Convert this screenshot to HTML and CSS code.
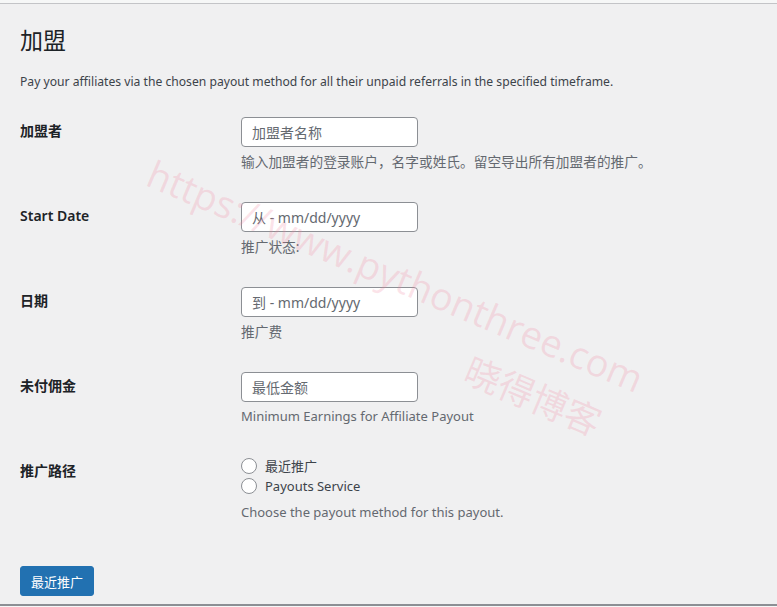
FILE: index.html
```html
<!DOCTYPE html>
<html lang="zh-CN">
<head>
  <meta charset="UTF-8">
  <title>加盟</title>
  <link rel="stylesheet" href="styles.css">
</head>
<body>
  <div class="screen">
    <h1>加盟</h1>
    <p class="intro">Pay your affiliates via the chosen payout method for all their unpaid referrals in the specified timeframe.</p>

    <div class="form-table">
      <div class="row">
        <label class="label">加盟者</label>
        <div class="field">
          <input type="text" placeholder="加盟者名称">
          <p class="description zh">输入加盟者的登录账户，名字或姓氏。留空导出所有加盟者的推广。</p>
        </div>
      </div>
      <div class="row">
        <label class="label">Start Date</label>
        <div class="field">
          <input type="text" placeholder="从 - mm/dd/yyyy">
          <p class="description zh">推广状态:</p>
        </div>
      </div>
      <div class="row">
        <label class="label">日期</label>
        <div class="field">
          <input type="text" placeholder="到 - mm/dd/yyyy">
          <p class="description zh">推广费</p>
        </div>
      </div>
      <div class="row">
        <label class="label">未付佣金</label>
        <div class="field">
          <input type="text" placeholder="最低金额">
          <p class="description">Minimum Earnings for Affiliate Payout</p>
        </div>
      </div>
      <div class="row">
        <label class="label">推广路径</label>
        <div class="field">
          <label class="radio"><input type="radio" name="method"><span>最近推广</span></label>
          <label class="radio"><input type="radio" name="method"><span>Payouts Service</span></label>
          <p class="description">Choose the payout method for this payout.</p>
        </div>
      </div>
    </div>

    <button class="button-primary">最近推广</button>

    <div class="watermark">
      <span class="wm-url">https://www.pythonthree.com</span>
      <span class="wm-name">晓得博客</span>
    </div>
  </div>
</body>
</html>
```

FILE: styles.css
```css
html, body {
  margin: 0;
  height: 100%;
}
body {
  background: #f6f7f7;
  font-family: "Noto Sans", "Noto Sans CJK SC", sans-serif;
  color: #1d2327;
  font-size: 13px;
}
.screen {
  position: relative;
  overflow: hidden;
  margin-top: 3px;
  height: 603px;
  box-sizing: border-box;
  background: #f0f0f1;
  border-top: 1px solid #c3c4c7;
  border-bottom: 2px solid #8c8f94;
  padding: 0 20px;
}
h1 {
  margin: 22px 0 0;
  font-size: 23px;
  font-weight: 400;
  line-height: 29px;
  color: #1d2327;
}
.intro {
  margin: 17px 0 0;
  font-size: 12.15px;
  line-height: 19px;
  color: #3c434a;
}
.form-table {
  margin-top: 26px;
}
.row {
  display: flex;
  height: 85px;
}
.label {
  width: 220px;
  flex-shrink: 0;
  padding-top: 4px;
  font-size: 14px;
  font-weight: 600;
  line-height: 20px;
  color: #1d2327;
}
.field {
  padding-left: 1px;
}
.field input[type="text"] {
  display: block;
  box-sizing: border-box;
  width: 177px;
  height: 30px;
  margin: 0;
  padding: 0 10px;
  border: 1px solid #8c8f94;
  border-radius: 4px;
  background: #fff;
  font-family: inherit;
  font-size: 14px;
  color: #2c3338;
}
.field input::placeholder {
  color: #646970;
}
.description {
  margin: 5px 0 0;
  font-size: 13px;
  line-height: 19px;
  color: #646970;
}
.description.zh {
  font-size: 13.7px;
}
.radio {
  display: flex;
  align-items: center;
  height: 20px;
  line-height: 20px;
  font-size: 13px;
  color: #3c434a;
}
.radio:first-child {
  margin-top: -1px;
}
.radio input {
  appearance: none;
  flex-shrink: 0;
  width: 16px;
  height: 16px;
  margin: 0 8px 0 0;
  border: 1px solid #8c8f94;
  border-radius: 50%;
  background: #fff;
}
.radio + .description {
  margin-top: 7px;
}
.button-primary {
  display: block;
  margin-top: 24px;
  width: 74px;
  height: 30px;
  padding: 0;
  border: 1px solid #2271b1;
  border-radius: 3px;
  background: #2271b1;
  color: #fff;
  font-family: inherit;
  font-size: 13px;
}
.watermark {
  position: absolute;
  left: 160px;
  top: 143px;
  pointer-events: none;
  color: rgba(240, 130, 155, 0.22);
}
.wm-url {
  position: absolute;
  left: 0;
  top: 0;
  font-family: "Open Sans", sans-serif;
  font-size: 38px;
  white-space: nowrap;
  transform-origin: 0 0;
  transform: rotate(23deg);
}
.wm-name {
  position: absolute;
  left: 318px;
  top: 195px;
  font-size: 36px;
  white-space: nowrap;
  transform-origin: 0 0;
  transform: rotate(23deg);
}
```
